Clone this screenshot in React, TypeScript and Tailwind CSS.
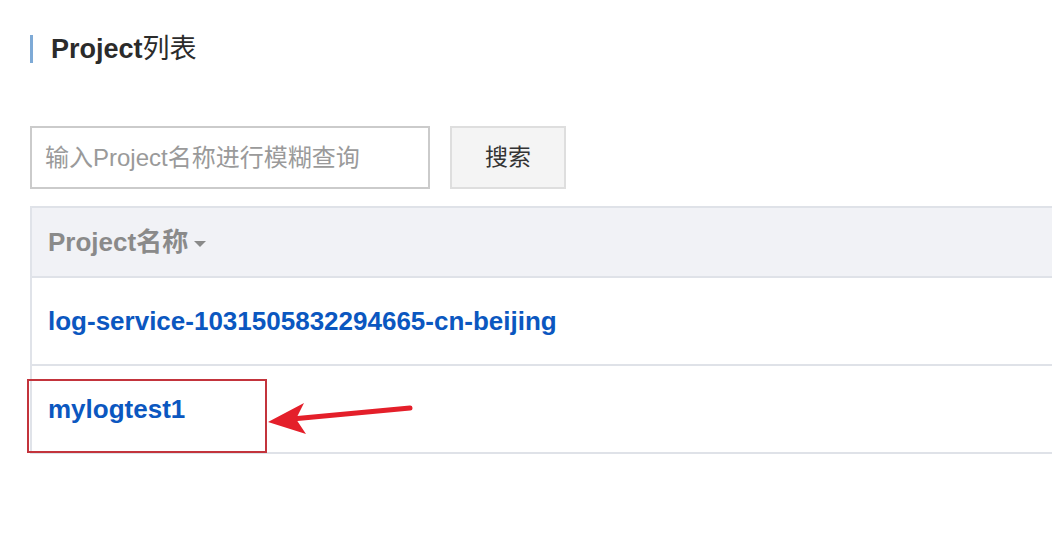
import React from "react";

const font = { fontFamily: '"Liberation Sans", Arial, "Noto Sans CJK SC", sans-serif' };

export default function App() {
  return (
    <div
      className="relative w-[1052px] h-[546px] overflow-hidden bg-white pl-[30px] pt-[35px]"
      style={font}
    >
      <div className="flex items-center h-[28px]">
        <div className="w-[3px] h-[28px] bg-[#7eaad6]" />
        <div className="ml-[18px] text-[27px] leading-none font-bold text-[#2b2b2b]">
          Project<span className="font-normal">列表</span>
        </div>
      </div>

      <div className="flex mt-[63px]">
        <div className="w-[400px] h-[63px] border-2 border-[#cbcbcb] flex items-center px-[13px] text-[24px] text-[#9a9a9a]">
          输入Project名称进行模糊查询
        </div>
        <div className="ml-[20px] w-[116px] h-[63px] border-2 border-[#dedede] bg-[#f4f4f4] flex items-center justify-center text-[23px] text-[#333]">
          搜索
        </div>
      </div>

      <div className="mt-[17px] w-[1040px] border-l-2 border-[#e0e3e9]">
        <div className="h-[72px] border-y-2 border-[#dfe2e8] bg-[#f1f2f6] flex items-center pl-[16px] text-[26px] font-bold text-[#8a8a8a]">
          Project名称
          <svg width="14" height="8" viewBox="0 0 14 8" className="ml-[5px] mt-[3px]">
            <path d="M1 1 L13 1 L7 7 Z" fill="#8a8a8a" />
          </svg>
        </div>
        <div className="h-[88px] border-b-2 border-[#dfe2e8] flex items-center pl-[16px] text-[26px] font-bold text-[#0b57c0]">
          log-service-1031505832294665-cn-beijing
        </div>
        <div className="h-[88px] border-b-2 border-[#dfe2e8] flex items-center pl-[16px] text-[26px] font-bold text-[#0b57c0]">
          mylogtest1
        </div>
      </div>

      <div className="absolute left-[27px] top-[379px] w-[240px] h-[74px] border-2 border-[#c3343c]" />
      <svg
        className="absolute left-0 top-0"
        width="1052"
        height="546"
        viewBox="0 0 1052 546"
      >
        <line x1="410" y1="408" x2="292" y2="419" stroke="#e41f2a" strokeWidth="5" strokeLinecap="round" />
        <path d="M268 422 L304 403 L296 419 L306 434 Z" fill="#e41f2a" />
      </svg>
    </div>
  );
}
